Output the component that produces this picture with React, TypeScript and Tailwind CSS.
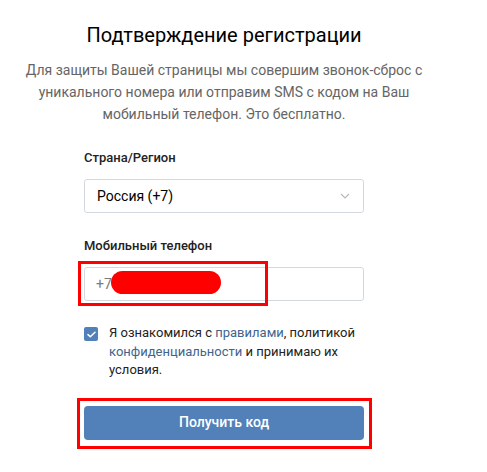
import { useState } from 'react';

export default function App() {
    const [agree, setAgree] = useState(true);
    return (
        <div className="w-[487px] h-[472px] bg-white font-['Roboto',sans-serif]">
            <div className="w-[448px] flex flex-col items-center pt-[23px]">
                <h1 className="text-[20px] leading-6 text-[#000]">Подтверждение регистрации</h1>
                <p className="mt-3 w-[420px] text-center text-[14px] leading-[22px] text-[#656565]">
                    Для защиты Вашей страницы мы совершим звонок-сброс с уникального номера или отправим SMS с кодом на Ваш мобильный
                    телефон. Это бесплатно.
                </p>
                <div className="w-[280px] mt-[25px]">
                    <p className="text-[13px] leading-4 font-medium text-[#222]">Страна/Регион</p>
                    <div className="mt-[13px] h-[34px] border border-[#d3d9de] rounded-[3px] flex items-center justify-between pl-3 pr-3">
                        <span className="text-[14px] text-[#000]">Россия (+7)</span>
                        <svg width="10" height="6" viewBox="0 0 10 6" fill="none" className="mr-[1px]">
                            <path d="M1 1l4 4 4-4" stroke="#b5b9bd" strokeWidth="1.1" />
                        </svg>
                    </div>
                    <p className="mt-[25px] text-[13px] leading-4 font-medium text-[#222]">Мобильный телефон</p>
                    <div className="relative mt-[13px] h-[34px] border border-[#d3d9de] rounded-[3px] flex items-center pl-[11px]">
                        <span className="text-[14px] text-[#7a7a7a]">+7</span>
                        <div className="absolute left-[26px] top-[3px] w-[110px] h-[23px] rounded-full bg-[#ff0000]"></div>
                        <div className="absolute left-[-7px] top-[-7px] w-[190px] h-[45px] border-[3px] border-[#ff0000]"></div>
                    </div>
                    <div className="mt-[23px] flex items-start gap-[11px]">
                        <button
                            onClick={() => setAgree(!agree)}
                            className={`mt-[3px] w-[14px] h-[14px] shrink-0 rounded-[2px] flex items-center justify-center ${agree ? 'bg-[#5181b8]' : 'border border-[#c1c9d1]'}`}>
                            {agree && (
                                <svg width="9" height="7" viewBox="0 0 9 7" fill="none">
                                    <path d="M1 3.6l2.3 2.2L8 1.2" stroke="#fff" strokeWidth="1.5" strokeLinecap="round" strokeLinejoin="round" />
                                </svg>
                            )}
                        </button>
                        <p className="text-[13px] leading-[18.5px] text-[#222]">
                            Я ознакомился с <span className="text-[#42648b]">правилами</span>, политикой{' '}
                            <span className="text-[#42648b]">конфиденциальности</span> и принимаю их условия.
                        </p>
                    </div>
                    <div className="relative mt-[26px]">
                        <button className="w-full h-[34px] rounded-[4px] bg-[#5181b8] text-white text-[14px] font-medium">Получить код</button>
                        <div className="absolute left-[-7px] top-[-8px] w-[295px] h-[51px] border-[3px] border-[#ff0000]"></div>
                    </div>
                </div>
            </div>
        </div>
    );
}
